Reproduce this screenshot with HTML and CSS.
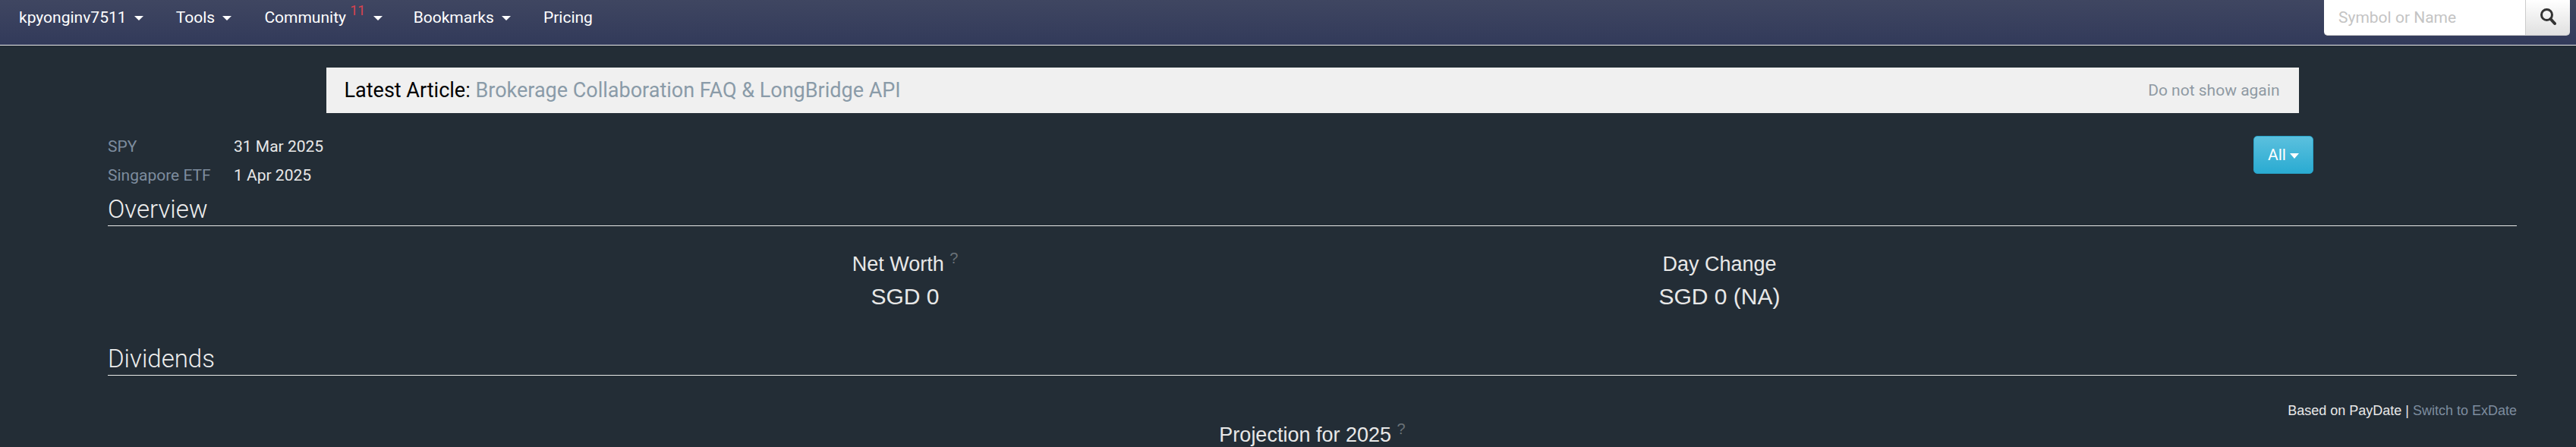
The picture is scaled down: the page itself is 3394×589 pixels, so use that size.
FILE: index.html
```html
<!DOCTYPE html>
<html lang="en">
<head>
    <meta charset="UTF-8">
    <title>Portfolio</title>
    <link rel="stylesheet" href="styles.css">
</head>
<body>
<header class="navbar">
    <nav class="nav-links">
        <a class="nav-item nav-user">kpyonginv7511 <span class="caret"></span></a>
        <a class="nav-item nav-tools">Tools <span class="caret"></span></a>
        <a class="nav-item nav-community">Community <sup class="badge">11</sup> <span class="caret"></span></a>
        <a class="nav-item nav-bookmarks">Bookmarks <span class="caret"></span></a>
        <a class="nav-item">Pricing</a>
    </nav>
    <form class="search">
        <input class="search-input" type="text" placeholder="Symbol or Name">
        <button class="search-btn" type="button">
            <svg width="22" height="24" viewBox="0 0 22 24">
                <circle cx="9.5" cy="9.5" r="7" fill="none" stroke="#333" stroke-width="3"/>
                <path d="M14.5 15 L20 21" stroke="#333" stroke-width="4" stroke-linecap="round"/>
            </svg>
        </button>
    </form>
</header>
<div class="container">
    <div class="article-bar">
        <span class="article-title">Latest Article: <a class="article-link">Brokerage Collaboration FAQ &amp; LongBridge API</a></span>
        <a class="article-hide">Do not show again</a>
    </div>

    <div class="summary-top">
        <table class="dates">
            <tr><td class="dates-label">SPY</td><td>31 Mar 2025</td></tr>
            <tr><td class="dates-label">Singapore ETF</td><td>1 Apr 2025</td></tr>
        </table>
        <button class="btn-all" type="button">All <span class="caret caret-small"></span></button>
    </div>

    <h2 class="section-title">Overview</h2>
    <div class="stats">
        <div class="stat">
            <div class="stat-name">Net Worth <sup class="hint">?</sup></div>
            <div class="stat-value">SGD 0</div>
        </div>
        <div class="stat">
            <div class="stat-name">Day Change</div>
            <div class="stat-value">SGD 0 (NA)</div>
        </div>
    </div>

    <h2 class="section-title section-dividends">Dividends</h2>
    <div class="date-switch">Based on PayDate | <a class="switch-link">Switch to ExDate</a></div>
    <div class="projection">Projection for 2025 <sup class="hint">?</sup></div>
</div>
</body>
</html>
```

FILE: styles.css
```css
html, body {
    height: 589px;
    overflow: hidden;
}

body {
    font-family: 'Roboto', sans-serif;
    font-size: 21px;
    background-color: #232d36;
    color: #e8e8e8;
    margin: 0;
    padding: 0;
}

.navbar {
    display: flex;
    justify-content: space-between;
    height: 59px;
    border-bottom: 1px solid #e8e8e8;
    background: linear-gradient(to bottom, #3f4661, #323a5a);
    padding: 0 8px 0 25px;
}

.nav-links {
    display: flex;
    padding-top: 11px;
    line-height: 24px;
}

.nav-item {
    color: #fff;
    margin-right: 43px;
    white-space: nowrap;
}

.nav-community {
    margin-right: 41px;
}

.caret {
    display: inline-block;
    width: 0;
    height: 0;
    margin-left: 5px;
    vertical-align: middle;
    border-top: 6px solid #fff;
    border-left: 6px solid transparent;
    border-right: 6px solid transparent;
}

.badge {
    color: #d9434e;
    font-size: 18px;
    line-height: 0;
    vertical-align: 10px;
}

.search {
    display: flex;
    height: 47px;
}

.search-input {
    width: 265px;
    box-sizing: border-box;
    border: none;
    border-bottom: 1px solid #ccc;
    border-radius: 0 0 0 5px;
    padding: 0 19px;
    font-family: 'Roboto', sans-serif;
    font-size: 21px;
    background: #fff;
}

.search-input::placeholder {
    color: #c4c4c4;
}

.search-btn {
    width: 59px;
    border: none;
    border-left: 1px solid #ccc;
    border-bottom: 1px solid #ccc;
    border-radius: 0 0 5px 0;
    background: linear-gradient(to bottom, #fff, #e0e0e0);
    padding: 0;
}

.container {
    padding: 29px 78px 0 142px;
}

.article-bar {
    display: flex;
    justify-content: space-between;
    align-items: center;
    box-sizing: border-box;
    width: 2599px;
    height: 60px;
    margin: 0 auto;
    padding: 0 25px 0 24px;
    background-color: #f0f0f0;
}

.article-title {
    font-size: 27px;
    color: #000;
}

.article-link {
    color: #8a9ba8;
}

.article-hide {
    color: #8f9aa3;
    font-size: 21px;
}

.summary-top {
    display: flex;
    justify-content: space-between;
    align-items: flex-start;
    height: 107px;
    padding-top: 32px;
    padding-right: 268px;
    box-sizing: border-box;
}

.dates {
    border-collapse: collapse;
}

.dates td {
    padding: 0 0 14px 0;
    line-height: 24px;
}

.dates-label {
    color: #7d8c9e;
    width: 166px;
}

.btn-all {
    width: 79px;
    height: 50px;
    margin-top: -2px;
    border: 1px solid #28a4c9;
    border-radius: 5px;
    background: linear-gradient(to bottom, #5bc0de, #2aabd2);
    color: #fff;
    font-family: 'Roboto', sans-serif;
    font-size: 21px;
    padding: 0;
}

.caret-small {
    margin-left: 0;
    border-top-width: 7px;
}

.section-title {
    font-size: 33px;
    font-weight: 300;
    line-height: 40px;
    margin: 0;
    padding-bottom: 1px;
    border-bottom: 1px solid #e8e8e8;
    color: #eee;
}

.stats {
    display: grid;
    grid-template-columns: 1073px 1073px;
    justify-content: center;
    height: 155px;
    padding-top: 29px;
    box-sizing: border-box;
    font-family: 'Liberation Sans', sans-serif;
    text-align: center;
}

.stat-name {
    font-size: 27px;
    line-height: 42px;
}

.stat-value {
    font-size: 30px;
    line-height: 44px;
}

.hint {
    color: #6a7278;
    font-size: 20px;
    line-height: 0;
}

.date-switch {
    font-family: 'Liberation Sans', sans-serif;
    font-size: 18px;
    text-align: right;
    margin-top: 34px;
    line-height: 24px;
}

.switch-link {
    color: #7d8c9e;
}

.projection {
    font-family: 'Liberation Sans', sans-serif;
    font-size: 27px;
    line-height: 40px;
    text-align: center;
    margin-top: 0;
}
```
